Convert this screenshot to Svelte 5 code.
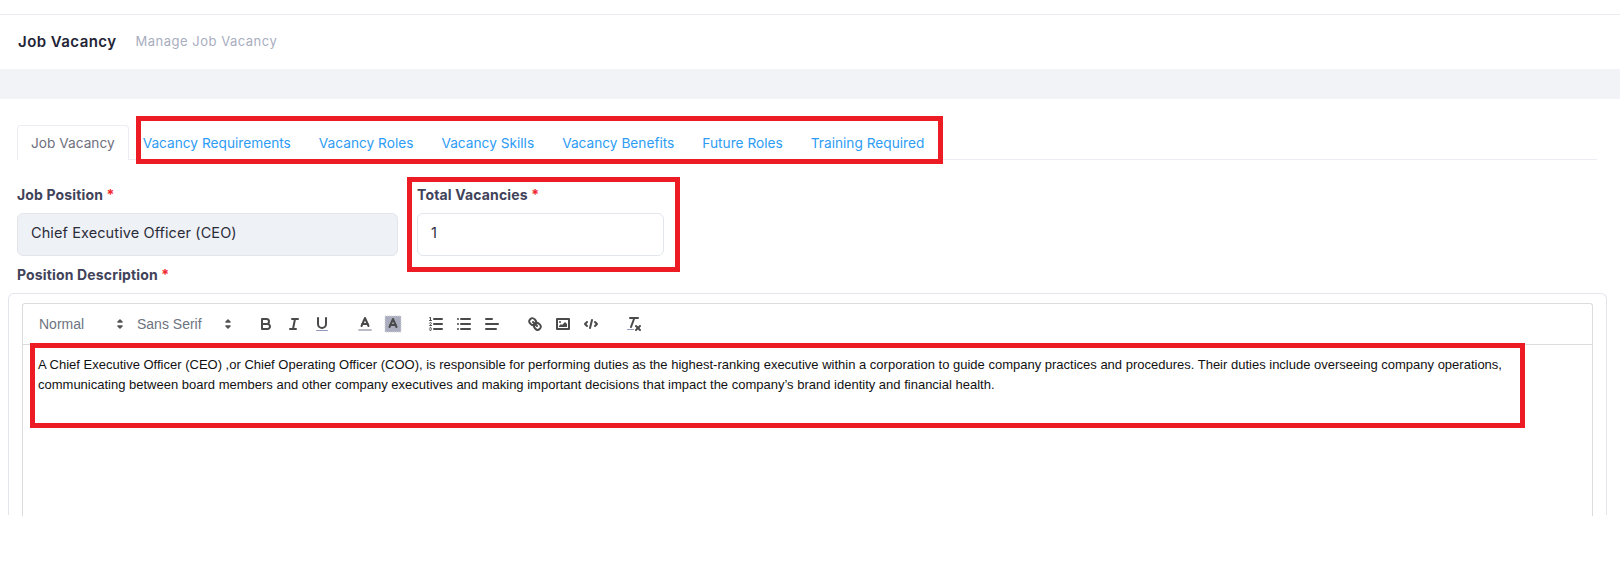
<script lang="ts">
  const tabs = ['Vacancy Requirements', 'Vacancy Roles', 'Vacancy Skills', 'Vacancy Benefits', 'Future Roles', 'Training Required'];
</script>

<div class="page">
  <div class="topbar"></div>
  <div class="subheader">
    <h3>Job Vacancy</h3>
    <span class="desc">Manage Job Vacancy</span>
  </div>
  <div class="band"></div>

  <div class="content">
    <ul class="tabs">
      <li class="tab active">Job Vacancy</li>
      {#each tabs as tab}
        <li class="tab">{tab}</li>
      {/each}
    </ul>

    <div class="row">
      <div class="field pos">
        <label for="pos">Job Position <b>*</b></label>
        <div id="pos" class="input disabled">Chief Executive Officer (CEO)</div>
      </div>
      <div class="field total">
        <label for="total">Total Vacancies <b>*</b></label>
        <div id="total" class="input">1</div>
      </div>
    </div>

    <div class="desc-label">Position Description <b>*</b></div>
  </div>

  <div class="card">
    <div class="editor">
      <div class="toolbar">
        <span class="picker normal">Normal
          <svg viewBox="0 0 18 18"><polygon points="7 11 9 13 11 11" /><polygon points="7 7 9 5 11 7" /></svg>
        </span>
        <span class="picker font">Sans Serif
          <svg viewBox="0 0 18 18"><polygon points="7 11 9 13 11 11" /><polygon points="7 7 9 5 11 7" /></svg>
        </span>

        <span class="group">
          <svg class="icon" viewBox="0 0 18 18"><path d="M5,4H9.5A2.5,2.5,0,0,1,12,6.5v0A2.5,2.5,0,0,1,9.5,9H5A0,0,0,0,1,5,9V4A0,0,0,0,1,5,4Z" /><path d="M5,9h5.5A2.5,2.5,0,0,1,13,11.5v0A2.5,2.5,0,0,1,10.5,14H5a0,0,0,0,1,0,0V9A0,0,0,0,1,5,9Z" /></svg>
          <svg class="icon" viewBox="0 0 18 18"><line x1="7" x2="13" y1="4" y2="4" /><line x1="5" x2="11" y1="14" y2="14" /><line x1="8" x2="10" y1="14" y2="4" /></svg>
          <svg class="icon" viewBox="0 0 18 18"><path d="M5,3V9a4.012,4.012,0,0,0,4,4H9a4.012,4.012,0,0,0,4-4V3" /><rect class="fill tint" height="1" rx=".5" ry=".5" width="12" x="3" y="15" /></svg>
        </span>

        <span class="group">
          <svg class="icon" viewBox="0 0 18 18"><line class="label" x1="3" x2="15" y1="15" y2="15" /><polyline points="5.5 11 9 3 12.5 11" /><line x1="11.63" x2="6.38" y1="9" y2="9" /></svg>
          <svg class="icon" viewBox="0 0 18 18"><rect class="swatch" x="1" y="1" width="16" height="16" /><polyline points="5.5 12 9 4 12.5 12" /><line x1="11.63" x2="6.38" y1="10" y2="10" /></svg>
        </span>

        <span class="group">
          <svg class="icon" viewBox="0 0 18 18"><line x1="7" x2="15" y1="4" y2="4" /><line x1="7" x2="15" y1="9" y2="9" /><line x1="7" x2="15" y1="14" y2="14" /><line class="thin" x1="2.5" x2="4.5" y1="5.5" y2="5.5" /><path class="fill" d="M3.5,6A0.5,0.5,0,0,1,3,5.5V3.085l-0.276.138A0.5,0.5,0,0,1,2.053,3c-0.124-.247-0.023-0.324.224-0.447l1-.5A0.5,0.5,0,0,1,4,2.5v3A0.5,0.5,0,0,1,3.5,6Z" /><path class="thin" d="M4.5,10.5h-2c0-.234,1.85-1.076,1.85-2.234A0.959,0.959,0,0,0,2.5,8.156" /><path class="thin" d="M2.5,14.846a0.959,0.959,0,0,0,1.85-.109A0.7,0.7,0,0,0,3.75,14a0.688,0.688,0,0,0,.6-0.736,0.959,0.959,0,0,0-1.85-.109" /></svg>
          <svg class="icon" viewBox="0 0 18 18"><line x1="6" x2="15" y1="4" y2="4" /><line x1="6" x2="15" y1="9" y2="9" /><line x1="6" x2="15" y1="14" y2="14" /><line x1="3" x2="3" y1="4" y2="4" /><line x1="3" x2="3" y1="9" y2="9" /><line x1="3" x2="3" y1="14" y2="14" /></svg>
          <svg class="icon" viewBox="0 0 18 18"><line x1="3" x2="15" y1="9" y2="9" /><line x1="3" x2="13" y1="14" y2="14" /><line x1="3" x2="9" y1="4" y2="4" /></svg>
        </span>

        <span class="group">
          <svg class="icon" viewBox="0 0 18 18"><line x1="7" x2="11" y1="7" y2="11" /><path d="M8.9,4.577a3.476,3.476,0,0,1,.36,4.679A3.476,3.476,0,0,1,4.577,8.9C3.185,7.5,2.035,6.4,4.217,4.217S7.5,3.185,8.9,4.577Z" /><path d="M13.423,9.1a3.476,3.476,0,0,0-4.679-.36,3.476,3.476,0,0,0,.36,4.679c1.392,1.392,2.5,2.542,4.679.36S14.815,10.5,13.423,9.1Z" /></svg>
          <svg class="icon" viewBox="0 0 18 18"><rect width="12" height="10" x="3" y="4" /><circle class="fill" cx="6" cy="7" r="1" /><polyline class="fill" points="5 12 5 11 7 9 8 10 11 7 13 9 13 12 5 12" /></svg>
          <svg class="icon" viewBox="0 0 18 18"><polyline points="5 7 3 9 5 11" /><polyline points="13 7 15 9 13 11" /><line x1="10" x2="8" y1="5" y2="13" /></svg>
        </span>

        <span class="group">
          <svg class="icon" viewBox="0 0 18 18"><line x1="5" x2="13" y1="3" y2="3" /><line x1="6" x2="9.35" y1="12" y2="3" /><line x1="11" x2="15" y1="11" y2="15" /><line x1="15" x2="11" y1="11" y2="15" /><rect class="fill tint" height="1" rx=".5" ry=".5" width="7" x="2" y="14" /></svg>
        </span>
      </div>
      <div class="text">
        <p>A Chief Executive Officer (CEO) ,or Chief Operating Officer (COO), is responsible for performing duties as the highest-ranking executive within a corporation to guide company practices and procedures. Their duties include overseeing company operations, communicating between board members and other company executives and making important decisions that impact the company’s brand identity and financial health.</p>
      </div>
    </div>
  </div>

  <!-- annotations drawn on top of the screenshot -->
  <div class="mark mark-tabs"></div>
  <div class="mark mark-total"></div>
  <div class="mark mark-text"></div>
</div>

<style>
  :global(body) {
    margin: 0;
    background: #fff;
  }

  .page {
    position: relative;
    width: 1620px;
    height: 563px;
    overflow: hidden;
    font-family: Inter, "Liberation Sans", sans-serif;
    color: #48465b;
  }

  .topbar {
    height: 14px;
    border-bottom: 1px solid #ebedf2;
  }

  .subheader {
    display: flex;
    align-items: center;
    gap: 19px;
    height: 52px;
    padding: 0 0 2px 18px;
  }

  .subheader h3 {
    margin: 0;
    font-size: 15px;
    font-weight: 600;
    letter-spacing: 0.45px;
    color: #222436;
  }

  .desc {
    font-size: 13px;
    letter-spacing: 0.5px;
    color: #a9adc0;
  }

  .band {
    height: 30px;
    background: #f2f3f7;
  }

  .content {
    padding: 26px 23px 0 17px;
  }

  .tabs {
    display: flex;
    margin: 0;
    padding: 0;
    height: 35px;
    list-style: none;
    border-bottom: 1px solid #ebedf2;
    box-sizing: border-box;
  }

  .tab {
    padding: 9px 13px 8px;
    font-size: 13.7px;
    line-height: 17px;
    color: #2d9cf4;
    border: 1px solid transparent;
    border-bottom: 0;
    height: 35px;
    box-sizing: border-box;
  }

  .tab.active {
    color: #6f6f7c;
    background: #fff;
    border-color: #ebedf2;
    border-radius: 4px 4px 0 0;
  }

  .row {
    display: flex;
    gap: 19px;
    margin-top: 26px;
  }

  .field label,
  .desc-label {
    display: block;
    font-size: 14px;
    font-weight: 700;
    line-height: 17px;
    letter-spacing: 0.15px;
    color: #41435a;
  }

  b {
    color: #f1252b;
    font-weight: 700;
  }

  .input {
    box-sizing: border-box;
    height: 43px;
    margin-top: 10px;
    padding: 0 13px 5px;
    display: flex;
    align-items: center;
    font-size: 14.5px;
    letter-spacing: 0.1px;
    color: #2b2c3a;
    border: 1px solid #e2e5ec;
    border-radius: 6px;
  }

  .input.disabled {
    background: #eef1f5;
  }

  .pos {
    width: 381px;
  }

  .total {
    width: 247px;
  }

  .desc-label {
    margin-top: 10px;
    line-height: 18px;
  }

  .card {
    box-sizing: border-box;
    height: 222px;
    margin: 9px 13px 0 8px;
    padding: 9px 13px 0 13px;
    border: 1px solid #e2e5ec;
    border-bottom: 0;
    border-radius: 6px 6px 0 0;
  }

  .editor {
    height: 100%;
    border: 1px solid #dcdcdf;
    border-bottom: 0;
    border-radius: 3px 3px 0 0;
  }

  .toolbar {
    display: flex;
    align-items: center;
    height: 41px;
    padding: 0 8px;
    box-sizing: border-box;
    border-bottom: 1px solid #dcdcdf;
    font-family: "Liberation Sans", Arial, sans-serif;
    font-size: 14px;
    color: #6d7381;
  }

  .picker {
    position: relative;
    display: block;
    height: 24px;
    line-height: 24px;
    padding-left: 8px;
    box-sizing: border-box;
  }

  .picker.normal {
    width: 98px;
  }

  .picker.font {
    width: 108px;
    margin-right: 15px;
  }

  .picker svg {
    position: absolute;
    right: 0;
    top: 3px;
    width: 18px;
    height: 18px;
  }

  .picker polygon {
    fill: #555;
    stroke: #555;
    stroke-linejoin: round;
    stroke-width: 1.6;
  }

  .group {
    display: flex;
    margin-right: 15px;
  }

  .icon {
    width: 18px;
    height: 18px;
    padding: 3px 5px;
    fill: none;
    stroke: #4a4a4a;
    stroke-width: 2;
    stroke-linecap: round;
    stroke-linejoin: round;
  }

  .icon .fill {
    fill: #4a4a4a;
    stroke: none;
  }

  .icon .tint {
    fill: #8f96b8;
  }

  .icon .label {
    stroke: #b9bcc4;
  }

  .icon .thin {
    stroke-width: 1;
  }

  .icon .swatch {
    fill: #a9adbd;
    stroke: #d0d2da;
    stroke-width: 1;
    stroke-dasharray: 1 1;
    stroke-linecap: butt;
  }

  .text {
    padding: 10px 15px 0 15px;
    font-family: "Liberation Sans", Arial, sans-serif;
    font-size: 13px;
    line-height: 19.5px;
    color: #111;
  }

  .text p {
    margin: 0;
  }

  .mark {
    position: absolute;
    box-sizing: border-box;
    border: 5px solid #ed1c24;
  }

  .mark-tabs {
    left: 136px;
    top: 116px;
    width: 807px;
    height: 48px;
  }

  .mark-total {
    left: 407px;
    top: 177px;
    width: 273px;
    height: 95px;
  }

  .mark-text {
    left: 30px;
    top: 343px;
    width: 1495px;
    height: 85px;
  }
</style>
